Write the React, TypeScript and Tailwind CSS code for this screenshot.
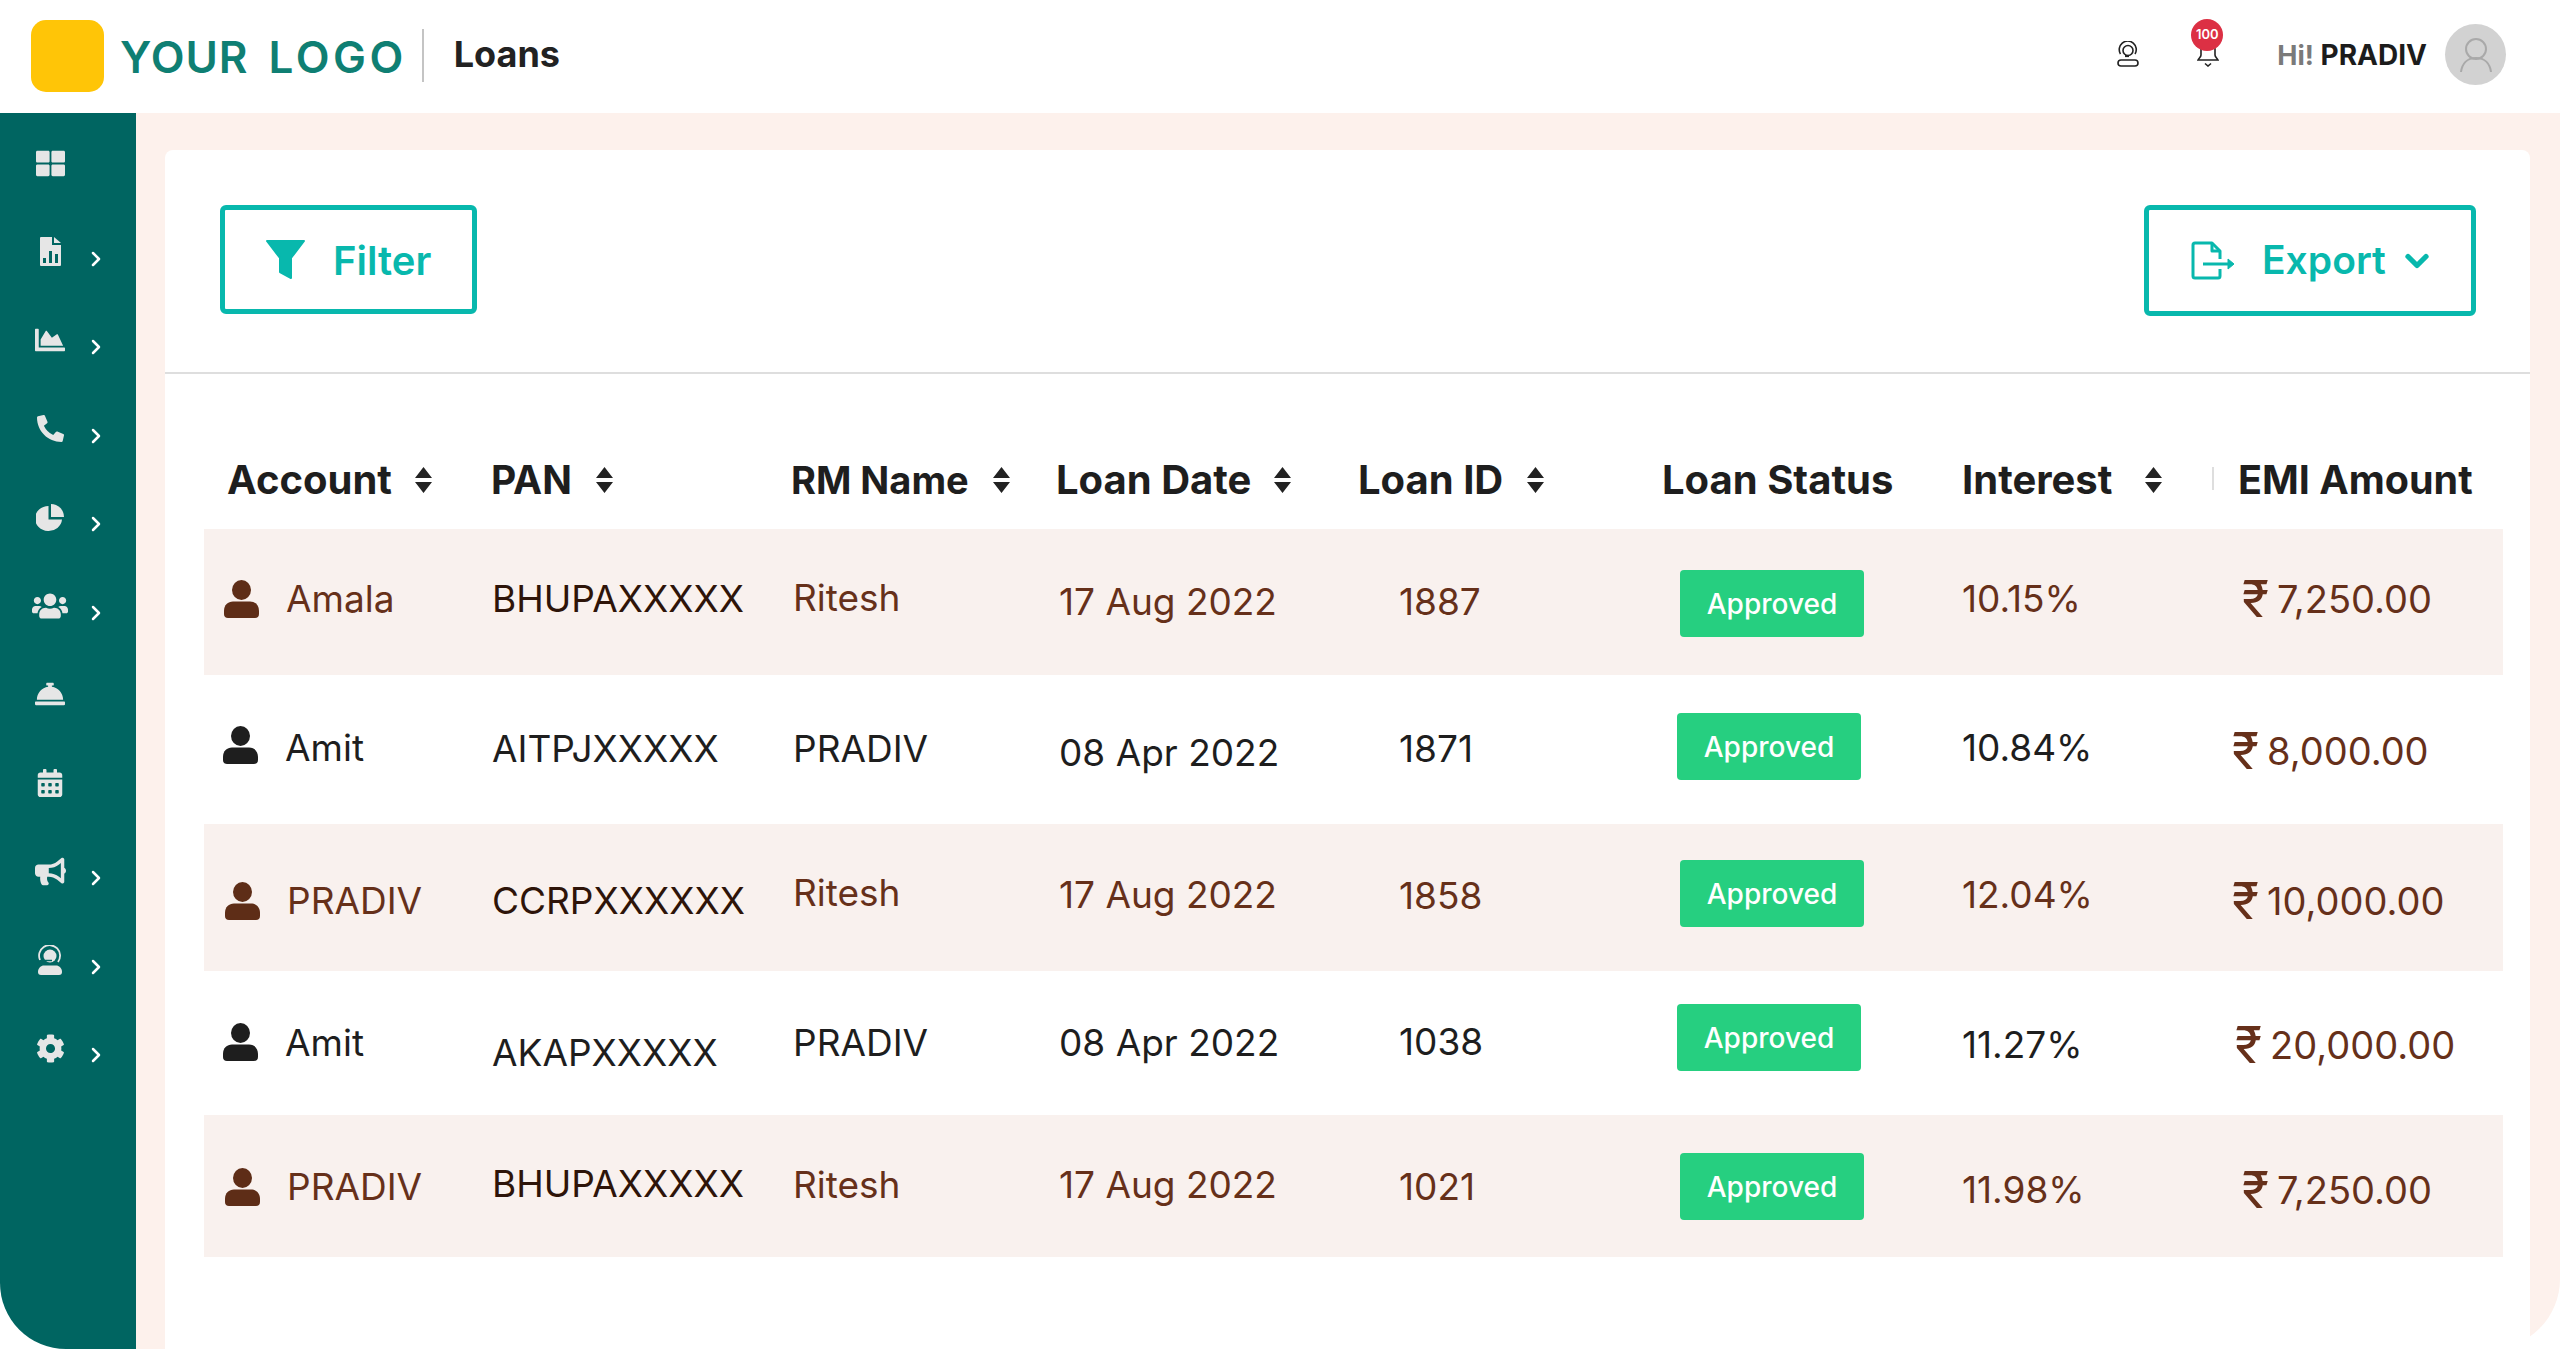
import React from 'react';
import {
  FaThLarge,
  FaChartArea,
  FaPhoneAlt,
  FaUsers,
  FaConciergeBell,
  FaCalendarAlt,
  FaBullhorn,
  FaCog,
} from 'react-icons/fa';
import { ChevronRight, ChevronDown } from 'lucide-react';

const FileChartIcon = () => (
  <svg width="21" height="29" viewBox="0 0 21 29" fill="currentColor">
    <path
      fillRule="evenodd"
      d="M1 0H12V8H21V28a1 1 0 0 1-1 1H1a1 1 0 0 1-1-1V1a1 1 0 0 1 1-1zM3 21h3v5H3zM9 14h3v12H9zM15 17h3v9h-3z"
    />
    <path d="M14 0l7 6h-7z" />
  </svg>
);

const PieIcon = () => (
  <svg width="28" height="29" viewBox="0 0 28 29" fill="currentColor">
    <path d="M12.500 3V16.500H26A13.500 12.500 0 1 1 12.500 3z" />
    <path d="M15 1A13 13 0 0 1 28 14H15z" />
  </svg>
);

const AgentSolidIcon = () => (
  <svg width="26" height="30" viewBox="0 0 26 30" fill="none">
    <path d="M3 15A10.5 10.5 0 1 1 21 17" stroke="currentColor" strokeWidth="1.8" />
    <circle cx="13" cy="11" r="6.5" fill="currentColor" />
    <path d="M8 15.500h7" stroke="#006561" strokeWidth="1.5" />
    <path d="M1 27c0-4 3-6.500 6-6.500h12c3 0 6 2.500 6 6.500 0 2-1 3-3 3H4c-2 0-3-1-3-3z" fill="currentColor" />
  </svg>
);

const AgentOutlineIcon = () => (
  <svg width="22" height="26" viewBox="0 0 22 26" fill="none" stroke="#222" strokeWidth="1.6">
    <path d="M3.500 13A8.500 8.500 0 1 1 18 13" />
    <circle cx="11" cy="9.500" r="5" />
    <path d="M8 15h4" strokeWidth="2.200" />
    <rect x="1" y="19" width="20" height="6" rx="3" />
  </svg>
);

const BellIcon = () => (
  <svg width="22" height="30" viewBox="0 0 22 30" fill="none" stroke="#222" strokeWidth="1.6">
    <path d="M4 12c0-5 3-9 7-9s7 4 7 9v6c0 2 2 3 3 5H1c1-2 3-3 3-5z" />
    <path d="M8 26.500l3 2.500 3-2.500" />
  </svg>
);

const FunnelIcon = () => (
  <svg width="39" height="39" viewBox="0 0 39 39" fill="#08b8ad" stroke="#08b8ad" strokeWidth="2" strokeLinejoin="round">
    <path d="M1 1H38L25 18V38L14 32V18Z" />
  </svg>
);

const ExportIcon = () => (
  <svg width="44" height="39" viewBox="0 0 44 39" fill="none" stroke="#08b8ad" strokeWidth="3" strokeLinejoin="round">
    <path d="M29 18V10L21 2H4a2 2 0 0 0-2 2v31a2 2 0 0 0 2 2h23a2 2 0 0 0 2-2v-7" />
    <path d="M21 2v8h8" />
    <path d="M12 23H38" />
    <path d="M37 18l6 5-6 5z" fill="#08b8ad" strokeWidth="1" />
  </svg>
);

const SortIcon = () => (
  <svg width="19" height="26" viewBox="0 0 19 26" fill="#222" className="shrink-0">
    <path d="M9.500 0L18 11H1zM9.500 26L1 15H18z" />
  </svg>
);

const PersonIcon = ({ color }: { color: string }) => (
  <svg width="35" height="38" viewBox="0 0 35 38" fill={color} className="shrink-0">
    <ellipse cx="17.500" cy="10" rx="9.500" ry="10" />
    <path d="M0 31c0-6 4-9.500 9-9.500h17c5 0 9 3.500 9 9.500v3c0 2.500-1.500 4-4 4H4c-2.500 0-4-1.500-4-4z" />
  </svg>
);

const navItems = [
  { icon: <FaThLarge size={29} />, arrow: false },
  { icon: <FileChartIcon />, arrow: true },
  { icon: <FaChartArea size={30} />, arrow: true },
  { icon: <FaPhoneAlt size={27} />, arrow: true },
  { icon: <PieIcon />, arrow: true },
  { icon: <FaUsers size={36} />, arrow: true },
  { icon: <FaConciergeBell size={30} />, arrow: false },
  { icon: <FaCalendarAlt size={28} />, arrow: false },
  { icon: <FaBullhorn size={31} />, arrow: true },
  { icon: <AgentSolidIcon />, arrow: true },
  { icon: <FaCog size={29} />, arrow: true },
];

const BROWN = 'text-[#66301a]';
const DARK_BROWN = 'text-[#2e1409]';
const BLACK = 'text-[#1e1e1e]';

type Row = {
  shaded: boolean;
  height: string;
  name: string;
  nameCls: string;
  iconCls: string;
  pan: string;
  panCls: string;
  rm: string;
  rmCls: string;
  date: string;
  dateCls: string;
  id: string;
  idCls: string;
  badgeCls: string;
  rate: string;
  rateCls: string;
  amount: string;
  amountCls: string;
};

const rows: Row[] = [
  {
    shaded: true,
    height: 'h-[146px]',
    name: 'Amala',
    nameCls: 'pt-[50px] pl-[82px]',
    iconCls: 'pt-[51px] pl-[20px]',
    pan: 'BHUPAXXXXX',
    panCls: 'pt-[50px]',
    rm: 'Ritesh',
    rmCls: 'pt-[49px]',
    date: '17 Aug 2022',
    dateCls: 'pt-[53px]',
    id: '1887',
    idCls: 'pt-[53px]',
    badgeCls: 'pt-[41px] pl-[3px]',
    rate: '10.15%',
    rateCls: 'pt-[50px]',
    amount: '7,250.00',
    amountCls: 'pt-[50px] pl-[10px]',
  },
  {
    shaded: false,
    height: 'h-[149px]',
    name: 'Amit',
    nameCls: 'pt-[53px] pl-[81px]',
    iconCls: 'pt-[51px] pl-[19px]',
    pan: 'AITPJXXXXX',
    panCls: 'pt-[54px]',
    rm: 'PRADIV',
    rmCls: 'pt-[54px]',
    date: '08 Apr 2022',
    dateCls: 'pt-[58px]',
    id: '1871',
    idCls: 'pt-[54px]',
    badgeCls: 'pt-[38px]',
    rate: '10.84%',
    rateCls: 'pt-[53px]',
    amount: '8,000.00',
    amountCls: 'pt-[56px]',
  },
  {
    shaded: true,
    height: 'h-[147px]',
    name: 'PRADIV',
    nameCls: 'pt-[57px] pl-[83px]',
    iconCls: 'pt-[58px] pl-[21px]',
    pan: 'CCRPXXXXXX',
    panCls: 'pt-[57px]',
    rm: 'Ritesh',
    rmCls: 'pt-[49px]',
    date: '17 Aug 2022',
    dateCls: 'pt-[51px]',
    id: '1858',
    idCls: 'pt-[52px]',
    badgeCls: 'pt-[36px] pl-[3px]',
    rate: '12.04%',
    rateCls: 'pt-[51px]',
    amount: '10,000.00',
    amountCls: 'pt-[57px]',
  },
  {
    shaded: false,
    height: 'h-[144px]',
    name: 'Amit',
    nameCls: 'pt-[52px] pl-[81px]',
    iconCls: 'pt-[52px] pl-[19px]',
    pan: 'AKAPXXXXX',
    panCls: 'pt-[62px]',
    rm: 'PRADIV',
    rmCls: 'pt-[52px]',
    date: '08 Apr 2022',
    dateCls: 'pt-[52px]',
    id: '1038',
    idCls: 'pt-[51px]',
    badgeCls: 'pt-[33px]',
    rate: '11.27%',
    rateCls: 'pt-[54px]',
    amount: '20,000.00',
    amountCls: 'pt-[54px] pl-[3px]',
  },
  {
    shaded: true,
    height: 'h-[142px]',
    name: 'PRADIV',
    nameCls: 'pt-[52px] pl-[83px]',
    iconCls: 'pt-[53px] pl-[21px]',
    pan: 'BHUPAXXXXX',
    panCls: 'pt-[49px]',
    rm: 'Ritesh',
    rmCls: 'pt-[50px]',
    date: '17 Aug 2022',
    dateCls: 'pt-[50px]',
    id: '1021',
    idCls: 'pt-[52px]',
    badgeCls: 'pt-[38px] pl-[3px]',
    rate: '11.98%',
    rateCls: 'pt-[55px]',
    amount: '7,250.00',
    amountCls: 'pt-[55px] pl-[10px]',
  },
];

const columns = [
  { label: 'Account', sort: true, cls: 'pl-[23px] gap-[22px]' },
  { label: 'PAN', sort: true, cls: 'gap-[23px] text-[39px]' },
  { label: 'RM Name', sort: true, cls: 'gap-[23px] text-[38px]' },
  { label: 'Loan Date', sort: true, cls: 'gap-[22px]' },
  { label: 'Loan ID', sort: true, cls: 'gap-[23px]' },
  { label: 'Loan Status', sort: false, cls: '' },
  { label: 'Interest', sort: true, cls: 'gap-[32px]' },
  { label: 'EMI Amount', sort: false, cls: 'text-[39.500px]' },
];

export default function App() {
  return (
    <div className="w-[2560px] h-[1349px] flex flex-col bg-white overflow-hidden font-[Inter,sans-serif]">
      {/* header */}
      <header className="h-[113px] shrink-0 flex items-center pl-[31px] pr-[54px]">
        <div className="w-[73px] h-[72px] mb-[2px] rounded-[15px] bg-[#ffc507]" />
        <div className="ml-[16px] flex gap-[20px] text-[44px] leading-none font-semibold tracking-[1px] text-[#0f7f73]">
          <span>YOUR</span>
          <span className="tracking-[3.500px]">LOGO</span>
        </div>
        <div className="ml-[15px] mb-[2px] w-[2px] h-[53px] bg-[#c4c4c4]" />
        <div className="ml-[30px] mb-[5px] text-[36px] leading-none font-bold text-[#222]">Loans</div>

        <div className="ml-auto flex items-center">
          <div className="-mt-[6px]">
            <AgentOutlineIcon />
          </div>
          <div className="relative ml-[58px] -mt-[10px]">
            <BellIcon />
            <span className="absolute -top-[18px] -left-[6px] w-[32px] h-[32px] rounded-full bg-[#dc3044] text-white text-[13px] font-semibold flex items-center justify-center">
              100
            </span>
          </div>
          <div className="ml-[58px] mb-[3px] text-[28px] font-bold">
            <span className="text-[#7a7a7a] text-[27px]">Hi!</span> <span className="text-[#1c1c1c]">PRADIV</span>
          </div>
          <div className="ml-[18px] mb-[4px] w-[61px] h-[61px] rounded-full bg-[#d2d2d2] flex items-center justify-center">
            <svg width="32" height="36" viewBox="0 0 32 36" fill="none" stroke="#a9a9a9" strokeWidth="2">
              <circle cx="16" cy="12" r="10" />
              <path d="M1 35c1-8 6-14 15-14s14 6 15 14" />
            </svg>
          </div>
        </div>
      </header>

      <div className="flex-1 flex min-h-0">
        {/* sidebar */}
        <aside className="w-[136px] shrink-0 bg-[#006561] rounded-bl-[66px] pt-[6px] text-[#e6e6e6]">
          {navItems.map((item, i) => (
            <div key={i} className="h-[88.500px] flex items-center pl-[30px]">
              <div className="w-[40px] flex justify-center">{item.icon}</div>
              {item.arrow && <ChevronRight size={24} strokeWidth={2.500} className="ml-[14px] mt-[14px] text-white" />}
            </div>
          ))}
        </aside>

        {/* main */}
        <main className="flex-1 min-w-0 bg-[#fdf1ec] rounded-br-[70px] pl-[29px] pr-[30px] pt-[37px]">
          <div className="h-full bg-white rounded-t-[8px]">
            <div className="h-[224px] border-b-2 border-[#dedede] flex items-start justify-between pt-[55px] pl-[55px] pr-[54px]">
              <button className="w-[257px] h-[109px] border-[5px] border-[#08b8ad] rounded-[6px] flex items-center pl-[41px] gap-[28px] text-[#08b8ad] text-[40px] font-semibold">
                <FunnelIcon />
                <span className="mt-[2px]">Filter</span>
              </button>
              <button className="w-[332px] h-[111px] border-[5px] border-[#08b8ad] rounded-[6px] flex items-center pl-[42px] text-[#08b8ad] text-[39px] font-semibold">
                <ExportIcon />
                <span className="ml-[27px]">Export</span>
                <ChevronDown size={36} strokeWidth={3.500} className="ml-[13px]" />
              </button>
            </div>

            <div className="pl-[39px] pr-[27px]">
              {/* table head */}
              <div className="relative h-[155px] pt-[86px] grid grid-cols-[287px_300px_265px_302px_304px_300px_276px_265px] text-[40px] leading-[40px] font-bold text-[#1e1e1e]">
                {columns.map((c) => (
                  <div key={c.label} className={`flex items-center h-[40px] whitespace-nowrap ${c.cls}`}>
                    {c.label}
                    {c.sort && <SortIcon />}
                  </div>
                ))}
                <div className="absolute left-[2008px] top-[93px] w-[2px] h-[23px] bg-[#dedede]" />
              </div>

              {/* rows */}
              {rows.map((r, i) => {
                const main = r.shaded ? BROWN : BLACK;
                return (
                  <div
                    key={i}
                    className={`grid grid-cols-[288px_301px_266px_340px_278px_285px_270px_271px] text-[37px] leading-[40px] whitespace-nowrap ${r.height} ${
                      r.shaded ? 'bg-[#f9f1ee]' : 'bg-white'
                    }`}
                  >
                    <div className={`relative ${r.nameCls} ${main}`}>
                      {r.name}
                      <div className={`absolute top-0 left-0 ${r.iconCls}`}>
                        <PersonIcon color={r.shaded ? '#5e2d17' : '#1e1e1e'} />
                      </div>
                    </div>
                    <div className={`${r.panCls} ${r.shaded ? DARK_BROWN : BLACK}`}>{r.pan}</div>
                    <div className={`${r.rmCls} ${main}`}>{r.rm}</div>
                    <div className={`${r.dateCls} ${main}`}>{r.date}</div>
                    <div className={`${r.idCls} ${main}`}>{r.id}</div>
                    <div className={r.badgeCls}>
                      <div className="w-[184px] h-[67px] rounded-[4px] bg-[#26cf80] text-white text-[28px] font-medium flex items-center justify-center">
                        Approved
                      </div>
                    </div>
                    <div className={`${r.rateCls} ${main}`}>{r.rate}</div>
                    <div className={`flex items-center h-[40px] box-content text-[38px] ${r.amountCls} ${BROWN}`}>
                      <span className="text-[50px] leading-none mr-[8px]">₹</span>
                      {r.amount}
                    </div>
                  </div>
                );
              })}
            </div>
          </div>
        </main>
      </div>
    </div>
  );
}
